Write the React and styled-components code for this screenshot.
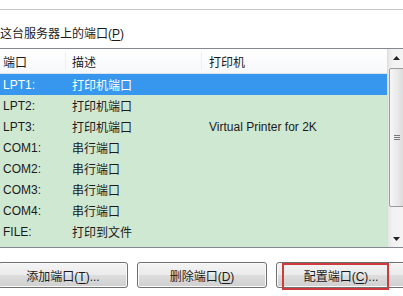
import React from "react";
import styled, { createGlobalStyle } from "styled-components";

const Global = createGlobalStyle`
  html, body {
    margin: 0;
    padding: 0;
    background: #fff;
    overflow: hidden;
  }
  body {
    font-family: "Liberation Sans", "Noto Sans CJK SC", sans-serif;
    font-size: 12px;
    color: #1b1b1b;
  }
`;

const Page = styled.div`
  width: 403px;
  height: 296px;
  overflow: hidden;
  background: #fff;
`;

const TopRule = styled.div`
  height: 9px;
  border-bottom: 1px solid #c4c4c4;
`;

const Label = styled.div`
  margin: 16px 0 6px 0;
  height: 16px;
  line-height: 16px;
  white-space: nowrap;
`;

const Key = styled.span`
  text-decoration: underline;
  text-underline-offset: 2px;
`;

const ListBox = styled.div`
  margin-left: -3px;
  width: 406px;
  height: 198px;
  border: 1px solid #828790;
  display: grid;
  grid-template-columns: 389px 17px;
  background: #cfe8d1;
`;

const Main = styled.div`
  display: flex;
  flex-direction: column;
  overflow: hidden;
`;

const HeaderRow = styled.div`
  display: grid;
  grid-template-columns: 68px 136px 1fr;
  height: 24px;
  background: linear-gradient(#ffffff, #f7f8fa);
  border-bottom: 1px solid #d9e3ec;
`;

const HeadCell = styled.div`
  position: relative;
  display: flex;
  align-items: center;
  padding-left: ${(p) => p.$pad}px;
  &::after {
    content: "";
    display: ${(p) => (p.$sep ? "block" : "none")};
    position: absolute;
    right: 0;
    top: 3px;
    bottom: 3px;
    width: 1px;
    background: #eceff3;
  }
`;

const Row = styled.div`
  display: grid;
  grid-template-columns: 68px 136px 1fr;
  height: 21px;
  align-items: center;
  background: ${(p) => (p.$selected ? "#3797ef" : "transparent")};
  color: ${(p) => (p.$selected ? "#fff" : "#1b1b1b")};
`;

const Cell = styled.div`
  padding-left: ${(p) => p.$pad}px;
  white-space: nowrap;
`;

const ScrollBar = styled.div`
  display: flex;
  flex-direction: column;
  background: linear-gradient(90deg, #e6e6e6, #f2f2f2 30%, #f4f4f4);
  border-left: 1px solid #dcdcdc;
`;

const Arrow = styled.div`
  height: 17px;
  display: flex;
  align-items: center;
  justify-content: center;
`;

const Track = styled.div`
  flex: 1;
  padding-top: 2px;
`;

const Thumb = styled.div`
  margin-left: 1px;
  width: 14px;
  height: 137px;
  border: 1px solid #9b9b9b;
  border-radius: 2px;
  background: linear-gradient(90deg, #f6f6f6, #e8e8e8 55%, #d9d9d9);
  display: flex;
  align-items: center;
  justify-content: center;
`;

const Grip = styled.div`
  width: 6px;
  height: 5px;
  background: repeating-linear-gradient(#7a7a7a 0 1px, transparent 1px 2px);
`;

const ButtonRow = styled.div`
  display: flex;
  gap: 9px;
  margin: 14px 0 0 -2px;
`;

const Button = styled.button`
  position: relative;
  flex: 0 0 130px;
  height: 26px;
  border: 1px solid #707070;
  border-radius: 3px;
  background: linear-gradient(#f4f4f4 0%, #ebebeb 48%, #dddddd 52%, #cfcfcf 100%);
  box-shadow: inset 0 0 0 1px #fbfbfb;
  font-family: inherit;
  font-size: 12px;
  color: #1b1b1b;
  padding: 0;
  white-space: nowrap;
`;

const Highlight = styled.span`
  position: absolute;
  left: 5px;
  top: 0;
  width: 103px;
  height: 23px;
  border: 2px solid #cf3a3f;
  pointer-events: none;
`;

const UpArrow = () => (
  <svg width="7" height="4" viewBox="0 0 7 4">
    <path d="M3.5 0 L7 4 L0 4 Z" fill="#222" />
  </svg>
);

const DownArrow = () => (
  <svg width="7" height="4" viewBox="0 0 7 4">
    <path d="M0 0 L7 0 L3.5 4 Z" fill="#222" />
  </svg>
);

const ports = [
  { name: "LPT1:", desc: "打印机端口", printer: "" },
  { name: "LPT2:", desc: "打印机端口", printer: "" },
  { name: "LPT3:", desc: "打印机端口", printer: "Virtual Printer for 2K" },
  { name: "COM1:", desc: "串行端口", printer: "" },
  { name: "COM2:", desc: "串行端口", printer: "" },
  { name: "COM3:", desc: "串行端口", printer: "" },
  { name: "COM4:", desc: "串行端口", printer: "" },
  { name: "FILE:", desc: "打印到文件", printer: "" },
];

export default function App() {
  return (
    <Page>
      <Global />
      <TopRule />
      <Label>
        这台服务器上的端口(<Key>P</Key>)
      </Label>
      <ListBox>
        <Main>
          <HeaderRow>
            <HeadCell $pad={5} $sep>端口</HeadCell>
            <HeadCell $pad={6} $sep>描述</HeadCell>
            <HeadCell $pad={7}>打印机</HeadCell>
          </HeaderRow>
          {ports.map((p, i) => (
            <Row key={p.name} $selected={i === 0}>
              <Cell $pad={5}>{p.name}</Cell>
              <Cell $pad={6}>{p.desc}</Cell>
              <Cell $pad={7}>{p.printer}</Cell>
            </Row>
          ))}
        </Main>
        <ScrollBar>
          <Arrow>
            <UpArrow />
          </Arrow>
          <Track>
            <Thumb>
              <Grip />
            </Thumb>
          </Track>
          <Arrow>
            <DownArrow />
          </Arrow>
        </ScrollBar>
      </ListBox>
      <ButtonRow>
        <Button>
          添加端口(<Key>T</Key>)...
        </Button>
        <Button>
          删除端口(<Key>D</Key>)
        </Button>
        <Button>
          配置端口(<Key>C</Key>)...
          <Highlight />
        </Button>
      </ButtonRow>
    </Page>
  );
}
